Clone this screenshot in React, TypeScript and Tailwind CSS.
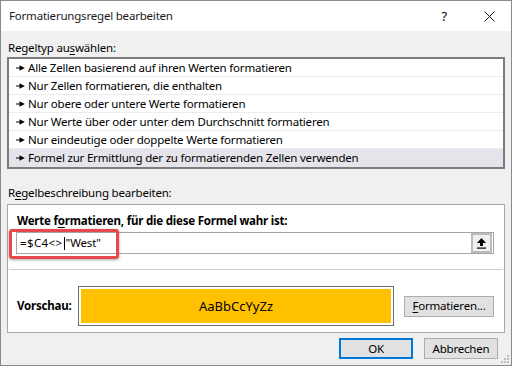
import React from "react";

const rules = [
  "Alle Zellen basierend auf ihren Werten formatieren",
  "Nur Zellen formatieren, die enthalten",
  "Nur obere oder untere Werte formatieren",
  "Nur Werte über oder unter dem Durchschnitt formatieren",
  "Nur eindeutige oder doppelte Werte formatieren",
  "Formel zur Ermittlung der zu formatierenden Zellen verwenden",
];

function Pointer() {
  return (
    <svg width="9" height="6" viewBox="0 0 9 6" className="shrink-0">
      <rect x="0" y="2.5" width="5" height="1" fill="#000" />
      <path d="M3.5 0.3 L8.8 3 L3.5 5.7 Z" fill="#000" />
    </svg>
  );
}

function UploadIcon() {
  return (
    <svg width="11" height="12" viewBox="0 0 11 12">
      <path d="M5.5 1 L10 6 L7 6 L7 9 L4 9 L4 6 L1 6 Z" fill="#000" />
      <rect x="1" y="10.5" width="9" height="1.2" fill="#000" />
    </svg>
  );
}

function Button({ children, primary }: { children: React.ReactNode; primary?: boolean }) {
  return (
    <button
      className={
        "h-[21px] w-[74px] flex items-center justify-center bg-[#e1e1e1] text-black " +
        (primary ? "border-2 border-[#0078d7]" : "border border-[#adadad]")
      }
    >
      {children}
    </button>
  );
}

export default function App() {
  return (
    <div className="w-[512px] h-[366px] border border-[#8a8a8a] bg-[#f0f0f0] flex flex-col relative overflow-hidden font-['Segoe_UI','Noto_Sans',sans-serif] text-[11.5px] tracking-[-0.2px] text-black leading-none">
      {/* title bar */}
      <div className="h-[30px] bg-white flex items-center shrink-0">
        <span className="ml-[8px] text-[#1a1a1a]">Formatierungsregel bearbeiten</span>
        <span className="ml-auto mr-[37px] text-[13px]">?</span>
        <svg width="11" height="11" viewBox="0 0 11 11" className="mr-[16px]">
          <path d="M0.5 0.5 L10.5 10.5 M10.5 0.5 L0.5 10.5" stroke="#111" strokeWidth="1" />
        </svg>
      </div>

      <div className="flex flex-col px-[6px]">
        <div className="h-[26px] flex items-end pb-[4px] pl-[1px]">
          Regeltyp au<span className="underline underline-offset-2">s</span>wählen:
        </div>

        {/* rule type list */}
        <div className="border-2 border-[#7c7c7c] bg-white flex flex-col">
          {rules.map((r, i) => (
            <div
              key={r}
              className={
                "h-[18px] flex items-center gap-[3px] pl-[7px] border-b " +
                (i === rules.length - 1 ? "bg-[#e4e4ea] border-transparent" : "border-[#ececec]")
              }
            >
              <Pointer />
              <span>{r}</span>
            </div>
          ))}
        </div>

        <div className="h-[35px] flex items-end pb-[6px] pl-[1px]">
          R<span className="underline underline-offset-2">e</span>gelbeschreibung bearbeiten:
        </div>

        {/* description panel */}
        <div className="relative h-[129px] border border-[#a8a8a8] bg-white flex flex-col">
          <div className="h-[24px] flex items-end pb-[3px] pl-[9px] font-bold">
            Werte f<span className="underline underline-offset-2">o</span>rmatieren, für die diese Formel wahr ist:
          </div>
          <div className="mt-[3px] ml-[8px] mr-[10px] h-[22px] border border-[#a5a5a5] flex items-center">
            <span className="ml-[3px] tracking-[0.4px]">=$C4&lt;&gt;</span>
            <span className="w-[1px] h-[13px] bg-black mx-[1px]" />
            <span>"West"</span>
            <div className="ml-auto mr-[1px] w-[21px] h-[20px] border-2 border-[#bcbcbc] bg-[#f0f0f0] flex items-center justify-center">
              <UploadIcon />
            </div>
          </div>
          <div className="mt-[15px] mx-[1px] h-px bg-[#cfcfcf]" />
          <div className="flex items-center mt-[16px] pl-[9px]">
            <span className="font-bold w-[61px]">Vorschau:</span>
            <div className="w-[316px] h-[40px] border border-[#6f6f6f] p-[2px] bg-white">
              <div className="w-full h-full bg-[#ffc000] flex items-center justify-center text-[13px] tracking-normal">
                AaBbCcYyZz
              </div>
            </div>
            <div className="ml-[10px] h-[21px] w-[90px] border border-[#adadad] bg-[#e1e1e1] flex items-center justify-center">
              <span className="underline underline-offset-2">F</span>ormatieren...
            </div>
          </div>
          {/* red highlight */}
          <div className="absolute left-[1px] top-[24px] w-[110px] h-[30px] border-[3px] border-[#e5484d] rounded-[3px] shadow-[0_1px_3px_rgba(0,0,0,0.35)]" />
        </div>

        <div className="flex justify-end gap-[11px] mt-[5px] mr-[7px]">
          <Button primary>OK</Button>
          <Button>Abbrechen</Button>
        </div>
      </div>

      {/* resize grip */}
      <svg width="9" height="9" viewBox="0 0 9 9" className="absolute right-[2px] bottom-[2px]">
        <rect x="7" y="1" width="2" height="2" fill="#bdbdbd" />
        <rect x="4" y="4" width="2" height="2" fill="#bdbdbd" />
        <rect x="7" y="4" width="2" height="2" fill="#bdbdbd" />
        <rect x="1" y="7" width="2" height="2" fill="#bdbdbd" />
        <rect x="4" y="7" width="2" height="2" fill="#bdbdbd" />
        <rect x="7" y="7" width="2" height="2" fill="#bdbdbd" />
      </svg>
    </div>
  );
}
